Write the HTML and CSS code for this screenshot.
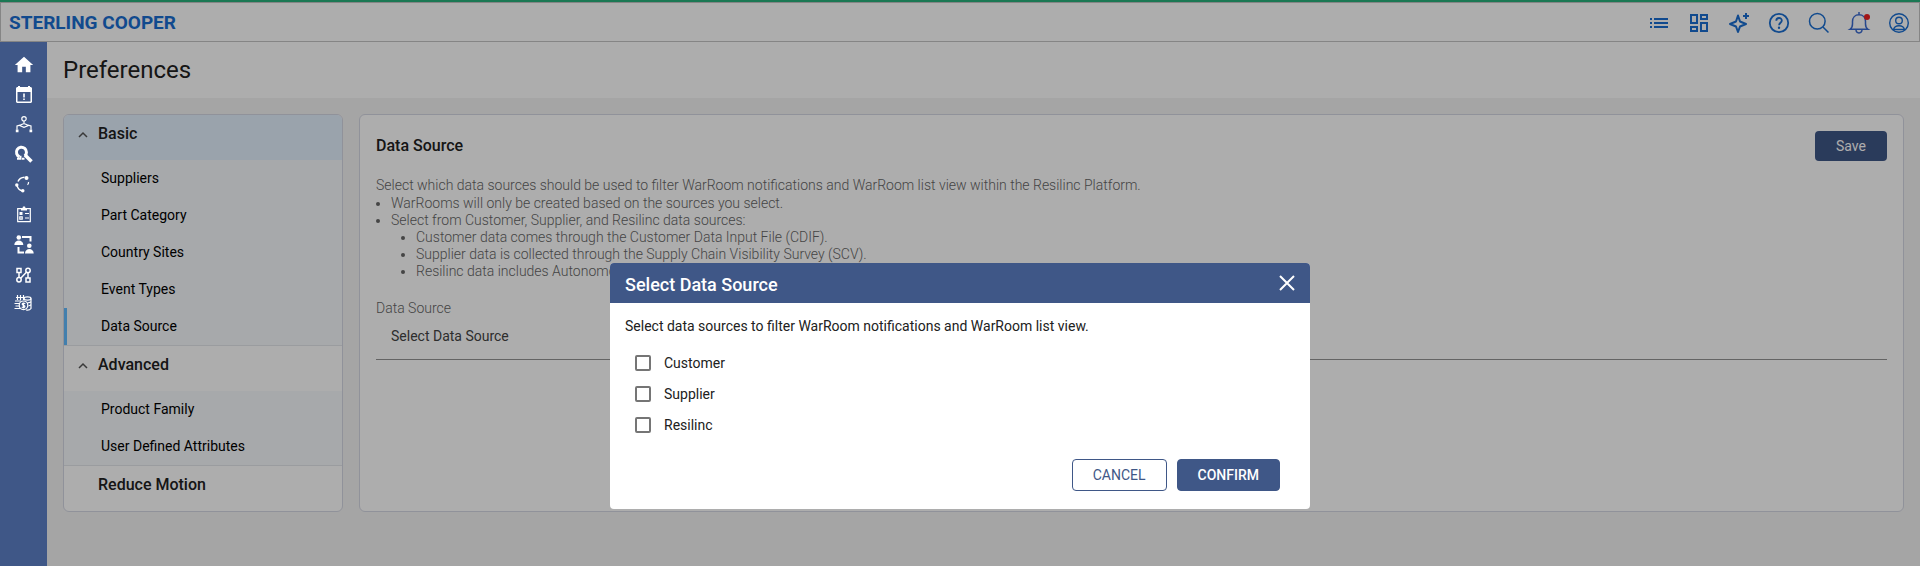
FILE: index.html
```html
<!DOCTYPE html>
<html lang="en">
<head>
    <meta charset="UTF-8">
    <meta name="viewport" content="width=device-width, initial-scale=1.0">
    <title>Preferences</title>
    <link rel="stylesheet" href="styles.css">
</head>
<body>
  <header class="topbar">
    <a class="brand" href="#">STERLING COOPER</a>
    <div class="top-actions">
      <button aria-label="List">
        <svg viewBox="0 0 24 24"><path fill="currentColor" d="M3 7h2v2H3zM3 11h2v2H3zM3 15h2v2H3zM7 7h14v2H7zM7 11h14v2H7zM7 15h14v2H7z"/></svg>
      </button>
      <button aria-label="Dashboard">
        <svg viewBox="0 0 24 24"><path fill="currentColor" d="M19 5v2h-4V5h4M9 5v6H5V5h4m10 8v6h-4v-6h4M9 17v2H5v-2h4M21 3h-8v6h8V3zM11 3H3v10h8V3zm10 8h-8v10h8V11zm-10 4H3v6h8v-6z"/></svg>
      </button>
      <button aria-label="Assistant">
        <svg viewBox="0 0 24 24"><path fill="none" stroke="currentColor" stroke-width="2" stroke-linejoin="round" d="M11 4.500 13 10.500 19 13 13 15.500 11 21 9 15.500 3 13 9 10.500z"/><path fill="none" stroke="currentColor" stroke-width="2" d="M19 2v6M16 5h6"/></svg>
      </button>
      <button aria-label="Help">
        <svg viewBox="0 0 24 24"><g fill="none" stroke="currentColor" stroke-width="1.800"><circle cx="12" cy="12" r="9.200"/><path d="M9.300 9.800c0-3.800 5.500-3.600 5.500-.3 0 2.200-2.700 2.300-2.700 4.700"/></g><circle cx="12" cy="16.700" r="1.200" fill="currentColor"/></svg>
      </button>
      <button aria-label="Search">
        <svg viewBox="0 0 24 24"><g fill="none" stroke="currentColor" stroke-width="1.500"><circle cx="10.300" cy="10.300" r="7.800"/><path d="m16 16 5.500 5.500"/></g></svg>
      </button>
      <button class="bell" aria-label="Notifications">
        <svg viewBox="0 0 24 24"><g fill="none" stroke="currentColor" stroke-width="1.500"><path d="M12 1v2.500M3 18.300h18c-2-1.300-2.500-2.800-2.500-5.300v-2.500c0-4-2.500-6.700-6.500-6.700s-6.500 2.700-6.500 6.700V13c0 2.500-.5 4-2.500 5.300z"/><path d="M9 18.500c0 4.500 6 4.500 6 0"/></g></svg>
        <span class="bell-dot"></span>
      </button>
      <button aria-label="Account">
        <svg viewBox="0 0 24 24"><g fill="none" stroke="currentColor" stroke-width="1.400"><circle cx="12" cy="12" r="9.300"/><circle cx="12" cy="9.500" r="3.300"/><path d="M6.500 19.200c0-6 11-6 11 0M6.500 18.500h11"/></g></svg>
      </button>
    </div>
  </header>

  <div class="layout">
    <nav class="sidebar">
      <a href="#" aria-label="Home">
        <svg viewBox="0 0 24 24"><path fill="currentColor" d="M10 20v-6h4v6h5v-8h3L12 3 2 12h3v8z"/></svg>
      </a>
      <a href="#" aria-label="Events">
        <svg viewBox="0 0 22 22"><path fill="currentColor" fill-rule="evenodd" d="M5 2h2v1h8V2h2v1h1l1 1v14l-1 1H4l-1-1V4l1-1h1zM4.500 8v9.500h13V8zM10.200 9.500h1.600v4h-1.600zM10.200 14.500h1.600V16h-1.600z"/></svg>
      </a>
      <a href="#" aria-label="Supply network">
        <svg viewBox="0 0 22 22"><g fill="none" stroke="currentColor" stroke-width="1.200"><circle cx="11" cy="4.800" r="2.200"/><path d="M11 7v3M4 15.500V12l3-.8L11 9.500l4 1.700 3 .8v3.500M6.500 11.500 11 13.300l4.500-1.800"/></g><path fill="currentColor" d="M2.800 15.500h2.700v2.700H2.800zM16.500 15.500h2.700v2.700h-2.700z"/></svg>
      </a>
      <a href="#" aria-label="Search parts">
        <svg viewBox="0 0 22 22"><g fill="none" stroke="currentColor"><path stroke-width="3" d="M6.500 12.800a5 5 0 1 1 5.200-.8"/><path stroke-width="3.600" d="m12 11 6.500 6.500"/><path stroke-width="2" d="M4 14.800h3.500v-3M9 14.800h2.500"/></g></svg>
      </a>
      <a href="#" aria-label="Lifecycle">
        <svg viewBox="0 0 22 22"><path fill="none" stroke="currentColor" stroke-width="1.500" d="M5 7.500c1-2.300 3-4 6.500-4.200M4 11c.3 2.700 2 5 5.500 6"/><path fill="none" stroke="currentColor" stroke-width="1.300" d="M15.500 8c.2 1-.2 2-1 2.800"/><g fill="currentColor"><circle cx="13.500" cy="4" r="2"/><circle cx="3.800" cy="11" r="1.700"/><circle cx="9.800" cy="16.800" r="1.700"/></g></svg>
      </a>
      <a href="#" aria-label="Assessments">
        <svg viewBox="0 0 22 22"><g fill="none" stroke="currentColor" stroke-width="1.200"><path d="M4.700 4.700h12.600v13H4.700zM12 9.500h4M12 14h4"/><path d="M6.800 12.800h2.400v2.400H6.800z"/></g><path fill="currentColor" d="M8 4h1.500l.5-1.500h2l.5 1.500H14v2.500H8zM6.500 8h3v3h-3z"/></svg>
      </a>
      <a href="#" aria-label="Collaboration">
        <svg viewBox="0 0 22 22"><g fill="currentColor"><circle cx="5.800" cy="3.500" r="2.300"/><path d="M1.300 11c0-6 9-6 9 0z"/><circle cx="16.300" cy="11.700" r="2.300"/><path d="M12 19.500c0-6 8.700-6 8.700 0z"/></g><path fill="none" stroke="currentColor" stroke-width="2" d="M9 3h8.500v4.500M5.500 13v5.500H11"/></svg>
      </a>
      <a href="#" aria-label="Workflows">
        <svg viewBox="0 0 22 22"><g fill="none" stroke="currentColor" stroke-width="1.500"><path d="M4 4.500h4v4H4zM13 14h4v4h-4z"/><circle cx="15" cy="6.500" r="2.200"/><circle cx="6" cy="15.800" r="2.200"/><path d="M6 8.500v5M15 8.700V14M7.700 14.200l5.700-6"/></g></svg>
      </a>
      <a href="#" aria-label="Revenue">
        <svg viewBox="0 0 22 22"><g fill="none" stroke="currentColor" stroke-width="1.200"><path d="M4.500 1v5M7.500 1v5M10.500 1v5M3 3.500h9M2 7h6M1.500 9.500H6M2.500 12H6M1.500 14.500H7"/><ellipse cx="14.500" cy="4.500" rx="3.500" ry="1.600"/><path d="M18 4.500v10c-1 1.500-3 1.800-5 1.500M18 7.500c-.8 1-2 1.300-3.500 1.300M18 10.500c-.8 1-1.500 1.200-2.500 1.300"/><circle cx="10.500" cy="11.300" r="4.300"/><path d="M12.300 9.700c-3-1.600-4.200 1-1.700 1.600s1.200 3.300-1.900 1.700M10.500 8.500v6"/></g></svg>
      </a>
    </nav>

    <main class="page">
      <h1 class="page-title">Preferences</h1>
      <div class="content">
        <aside class="menu">
          <button class="menu-head active">
            <svg class="chevron" viewBox="0 0 12 12"><path d="m2 9 4-4 4 4"/></svg>Basic
          </button>
          <ul class="menu-list">
            <li><a href="#">Suppliers</a></li>
            <li><a href="#">Part Category</a></li>
            <li><a href="#">Country Sites</a></li>
            <li><a href="#">Event Types</a></li>
            <li><a class="selected" href="#">Data Source</a></li>
          </ul>
          <button class="menu-head">
            <svg class="chevron" viewBox="0 0 12 12"><path d="m2 9 4-4 4 4"/></svg>Advanced
          </button>
          <ul class="menu-list">
            <li><a href="#">Product Family</a></li>
            <li><a href="#">User Defined Attributes</a></li>
          </ul>
          <button class="menu-head plain">Reduce Motion</button>
        </aside>

        <section class="panel">
          <div class="panel-head">
            <h2>Data Source</h2>
            <button class="btn-save">Save</button>
          </div>
          <div class="description">
            <p>Select which data sources should be used to filter WarRoom notifications and WarRoom list view within the Resilinc Platform.</p>
            <ul>
              <li>WarRooms will only be created based on the sources you select.</li>
              <li>Select from Customer, Supplier, and Resilinc data sources:
                <ul>
                  <li>Customer data comes through the Customer Data Input File (CDIF).</li>
                  <li>Supplier data is collected through the Supply Chain Visibility Survey (SCV).</li>
                  <li>Resilinc data includes Autonomous Mapping.</li>
                </ul>
              </li>
            </ul>
          </div>
          <label class="field-label" for="dataSource">Data Source</label>
          <select class="field" id="dataSource">
            <option>Select Data Source</option>
          </select>
        </section>
      </div>
    </main>
  </div>

  <!-- Modal -->
  <div class="overlay">
    <div class="modal" role="dialog" aria-labelledby="modalTitle">
      <div class="modal-head">
        <h2 id="modalTitle">Select Data Source</h2>
        <button class="close" aria-label="Close">
          <svg viewBox="0 0 16 16"><path d="m1 1 14 14M15 1 1 15"/></svg>
        </button>
      </div>
      <div class="modal-body">
        <p>Select data sources to filter WarRoom notifications and WarRoom list view.</p>
        <div class="options">
          <label><input type="checkbox">Customer</label>
          <label><input type="checkbox">Supplier</label>
          <label><input type="checkbox">Resilinc</label>
        </div>
        <div class="modal-actions">
          <button class="btn-outline">CANCEL</button>
          <button class="btn-primary">CONFIRM</button>
        </div>
      </div>
    </div>
  </div>
</body>
</html>
```
FILE: styles.css
```css
* { margin: 0; padding: 0; box-sizing: border-box; }

body {
    display: flex;
    flex-direction: column;
    min-height: 100vh;
    font-family: Roboto, Arial, sans-serif;
    font-size: 14px;
    line-height: 20px;
    color: #212121;
    background-color: #f4f4f4;
}

button, select, input { font: inherit; color: inherit; }

button {
    background: none;
    border: none;
    cursor: pointer;
}

a { color: inherit; text-decoration: none; }

svg { display: block; }

/* Header */
.topbar {
    display: flex;
    justify-content: space-between;
    align-items: center;
    height: 42px;
    padding: 2px 9px 0;
    background-color: #fff;
    border-top: 2px solid #29b27c;
    box-shadow: inset 0 0 0 1px #c4c4c4;
}

.brand {
    color: #1a6ed1;
    font-size: 19px;
    font-weight: 700;
}

.top-actions {
    display: flex;
    gap: 16px;
    color: #1a6ed1;
}

.top-actions button { position: relative; }

.top-actions svg { width: 24px; height: 24px; }

.bell-dot {
    position: absolute;
    top: 3px;
    right: 1px;
    width: 6px;
    height: 6px;
    border-radius: 50%;
    background-color: #f02020;
}

.top-actions .bell { color: #3a6ad0; }

.layout {
    display: flex;
    flex: 1;
}

/* Sidebar stays above the overlay */
.sidebar {
    position: relative;
    z-index: 20;
    display: flex;
    flex-direction: column;
    gap: 8px;
    padding: 12px 12px 12px 13px;
    color: #fff;
    background-color: #3f5787;
}

.sidebar svg { width: 22px; height: 22px; }

.page { flex: 1; }

.page-title {
    padding: 12px 16px;
    font-size: 24px;
    font-weight: 400;
    line-height: 32px;
    background-color: #fff;
}

.content {
    display: flex;
    gap: 16px;
    padding: 16px;
}

/* Left menu */
.menu {
    width: 280px;
    overflow: hidden;
    background-color: #fff;
    border: 1px solid #d5d7e3;
    border-radius: 6px;
}

.menu-head {
    display: flex;
    align-items: center;
    gap: 9px;
    width: 100%;
    padding: 9px 13px 16px;
    font-size: 16px;
    font-weight: 500;
    text-align: left;
}

.menu-head.active { background-color: #e4f0fe; }

.menu-head.plain { padding-left: 34px; }

.chevron {
    width: 12px;
    height: 12px;
    fill: none;
    stroke: #555;
    stroke-width: 1.5;
}

.menu-list {
    list-style: none;
    background-color: #f6f9fc;
    border-bottom: 1px solid #e4e6ea;
}

.menu-list a {
    display: block;
    padding: 8px 34px 9px;
    color: #000;
    border-left: 3px solid transparent;
}

.menu-list a.selected { border-left-color: #62bbff; }

/* Right panel */
.panel {
    flex: 1;
    padding: 16px;
    background-color: #fff;
    border: 1px solid #d5d7e3;
    border-radius: 6px;
}

.panel-head {
    display: flex;
    justify-content: space-between;
    align-items: center;
    margin-bottom: 14px;
}

.panel-head h2 {
    font-size: 16px;
    font-weight: 500;
}

.btn-save {
    width: 72px;
    height: 30px;
    color: #fff;
    background-color: #3f5787;
    border-radius: 4px;
}

.description {
    margin-bottom: 18px;
    font-weight: 300;
    line-height: 17px;
    color: #666;
}

.description p { line-height: 20px; }

.description ul {
    padding-left: 15px;
    list-style: disc;
}

.description ul ul { padding-left: 25px; }

.field-label {
    display: block;
    font-weight: 300;
    color: #666;
}

.field {
    display: block;
    width: 100%;
    height: 42px;
    padding: 0 15px 6px;
    color: #444;
    appearance: none;
    background: transparent;
    border: none;
    border-bottom: 1px solid #949494;
    border-radius: 0;
}

/* Modal */
.overlay {
    position: fixed;
    inset: 0;
    z-index: 10;
    display: flex;
    justify-content: center;
    align-items: flex-start;
    padding-top: 263px;
    background-color: rgba(0, 0, 0, 0.32);
}

.modal {
    width: 700px;
    overflow: hidden;
    background-color: #fff;
    border-radius: 4px;
}

.modal-head {
    display: flex;
    justify-content: space-between;
    align-items: center;
    height: 40px;
    padding: 0 15px;
    color: #fff;
    background-color: #3f5787;
}

.modal-head h2 {
    padding-top: 4px;
    font-size: 18px;
    font-weight: 500;
}

.close svg {
    width: 16px;
    height: 16px;
    fill: none;
    stroke: #fff;
    stroke-width: 2;
}

.modal-body { padding: 13px 15px 18px; }

.options {
    display: flex;
    flex-direction: column;
    align-items: flex-start;
    gap: 11px;
    padding: 17px 10px 0;
}

.options label {
    display: flex;
    align-items: center;
    gap: 13px;
}

.options input {
    appearance: none;
    width: 16px;
    height: 16px;
    border: 2px solid #757575;
    border-radius: 2px;
}

.options input:checked {
    background-color: #3f5787;
    border-color: #3f5787;
}

.modal-actions {
    display: flex;
    justify-content: flex-end;
    gap: 10px;
    padding: 24px 15px 0;
}

.modal-actions button {
    height: 32px;
    padding: 0 20px;
    border: 1px solid #3f5787;
    border-radius: 4px;
}

.btn-outline { color: #3f5787; }

.btn-primary {
    color: #fff;
    font-weight: 500;
    background-color: #3f5787;
}
```
